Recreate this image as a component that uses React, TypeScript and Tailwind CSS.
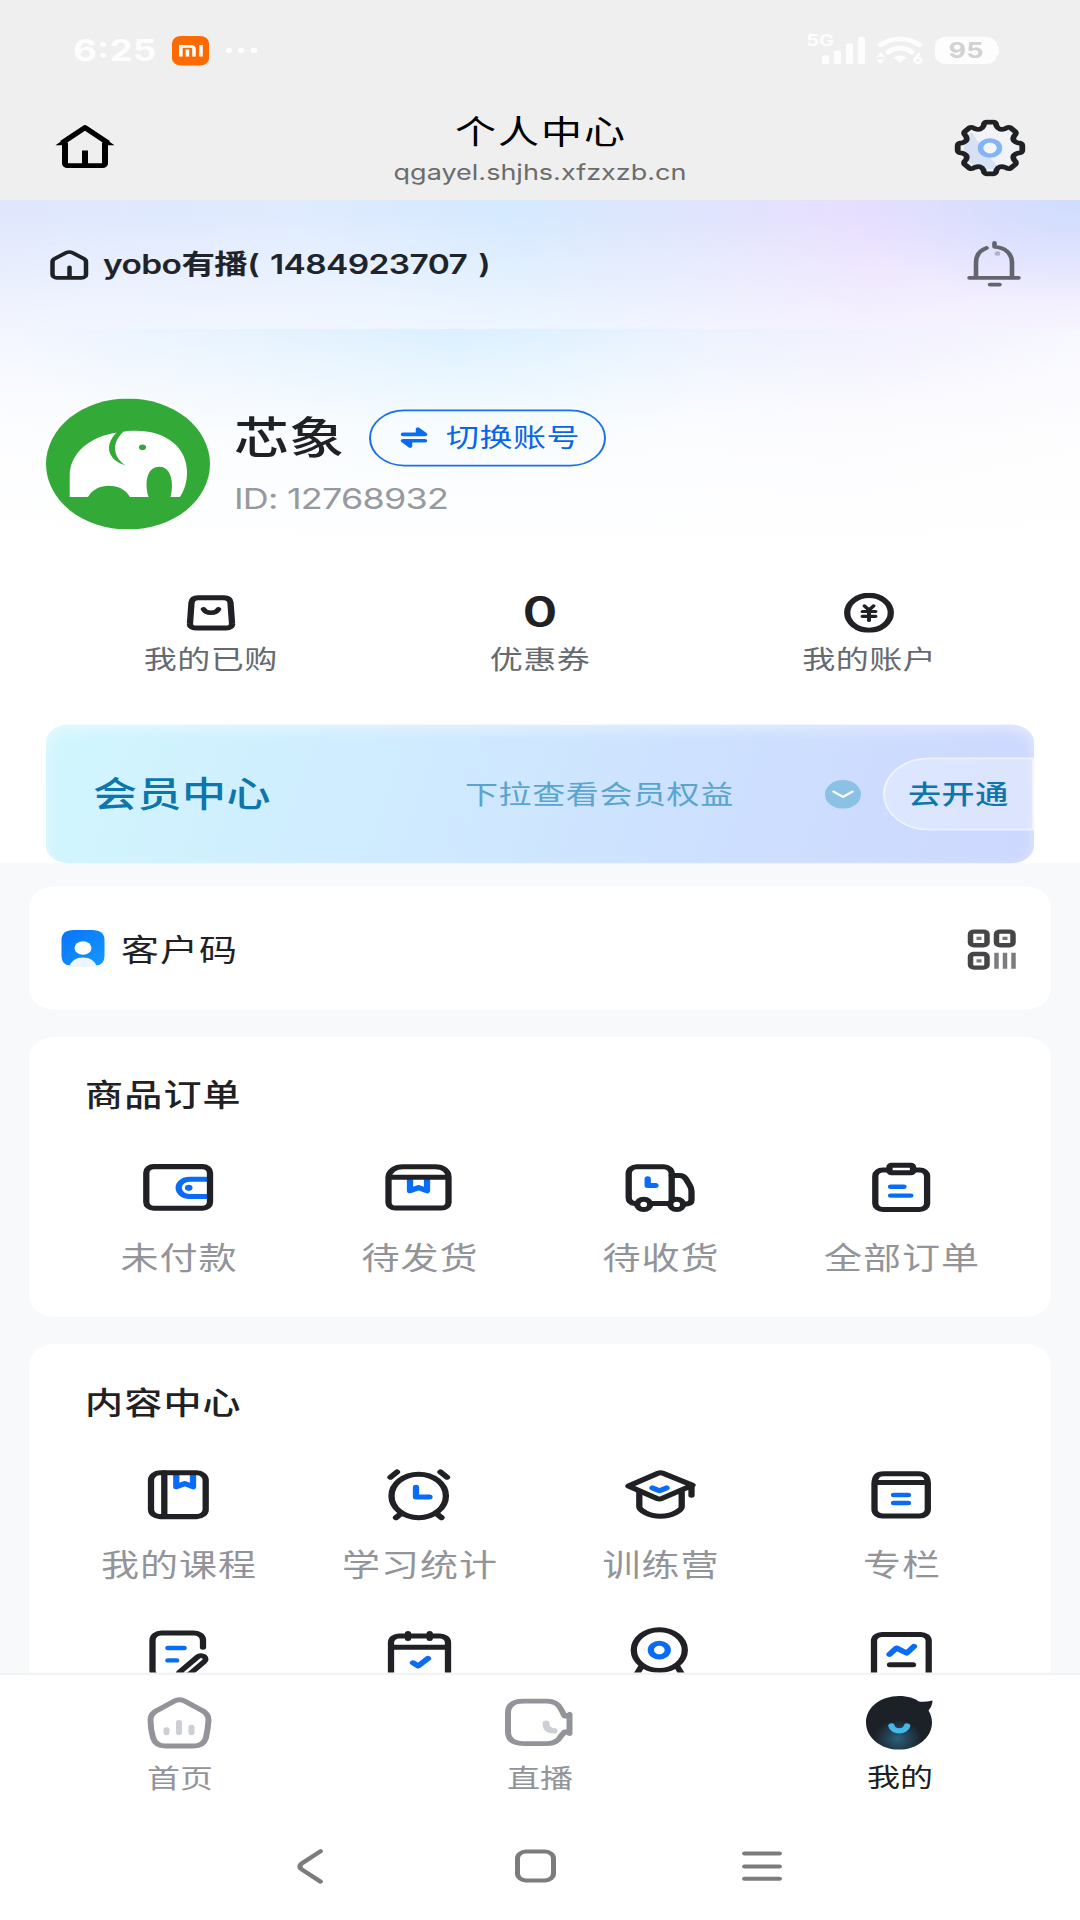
import type { ReactNode } from 'react'
import clsx from 'clsx'

const INK = '#1f2124'
const BLUE = '#0a6cf5'

function Icon({ size = 80, children, className }: { size?: number; children: ReactNode; className?: string }) {
  return (
    <svg
      width={size}
      height={size}
      viewBox={`0 0 ${size} ${size}`}
      fill="none"
      stroke={INK}
      strokeWidth={6.3}
      strokeLinecap="round"
      strokeLinejoin="round"
      className={clsx('shrink-0', className)}
    >
      {children}
    </svg>
  )
}

// Outline of the settings gear: eight round teeth joined by round notches
const polar = (deg: number, r: number) => {
  const a = (deg * Math.PI) / 180
  return `${(36 + r * Math.cos(a)).toFixed(1)} ${(36 + r * Math.sin(a)).toFixed(1)}`
}
const gearPath =
  Array.from({ length: 8 }, (_, k) => {
    const d = k * 45
    return `${k ? 'L' : 'M'}${polar(d - 13, 28.5)}Q${polar(d - 11, 32.5)} ${polar(d - 6, 32.5)}L${polar(d + 6, 32.5)}Q${polar(d + 11, 32.5)} ${polar(d + 13, 28.5)}Q${polar(d + 22.5, 23)} ${polar(d + 32, 28.5)}`
  }).join('') + 'Z'

type Item = { id: string; label?: string; icon: ReactNode }

const orders: Item[] = [
  {
    id: 'unpaid',
    label: '未付款',
    icon: (
      <Icon>
        <path d="M69 30H51.500a10.800 10.800 0 0 0 0 21.600H69" stroke={BLUE} strokeLinecap="butt" />
        <circle cx="50.700" cy="40.800" r="3.800" fill={BLUE} stroke="none" />
        <rect x="8.300" y="14.300" width="63.700" height="52" rx="7.500" />
      </Icon>
    ),
  },
  {
    id: 'unshipped',
    label: '待发货',
    icon: (
      <Icon>
        <path d="M31 29V44.500L39.500 40.500L48 44.500V29" stroke={BLUE} />
        <path d="M9.500 27.500C10 19.500 16 14.500 24 14.500H56C64 14.500 69.500 19.500 69.500 27.500V59a7 7 0 0 1-7 7H16.500a7 7 0 0 1-7-7ZM9.500 27.500H69.500" />
      </Icon>
    ),
  },
  {
    id: 'shipping',
    label: '待收货',
    icon: (
      <Icon>
        <path d="M15 60.500C11 60 8.700 57.500 8.700 53V22.500a8 8 0 0 1 8-8H43.700a8 8 0 0 1 8 8V56M31 60.500H49" />
        <path d="M51.700 25.500H59.500c3 0 5 1.500 6.500 4.500L69.500 37c1.500 3 2 5 2 8V56c0 3-1.500 4.500-5 5" />
        <circle cx="23.700" cy="61.500" r="6.500" />
        <circle cx="56.700" cy="61.500" r="6.500" />
        <path d="M27.700 29.500V38H35.500" stroke={BLUE} />
      </Icon>
    ),
  },
  {
    id: 'all',
    label: '全部订单',
    icon: (
      <Icon>
        <rect x="14.300" y="18.500" width="51.800" height="49.500" rx="7.500" />
        <rect x="28.500" y="12.500" width="23.500" height="9.500" rx="2" fill="white" />
        <path d="M29.700 39.500H42.800M29.700 50.500H49.700" stroke={BLUE} strokeWidth={5.5} />
      </Icon>
    ),
  },
]

const contents: Item[] = [
  {
    id: 'course',
    label: '我的课程',
    icon: (
      <Icon>
        <path d="M38.300 15V30.500L46.700 26.500L55 30.500V15" stroke={BLUE} />
        <rect x="13" y="13" width="54.700" height="54.800" rx="9" />
        <path d="M26.300 13V67" />
      </Icon>
    ),
  },
  {
    id: 'study',
    label: '学习统计',
    icon: (
      <Icon>
        <circle cx="39.700" cy="41.900" r="27.200" />
        <path d="M11.500 18.500L18 12M61.500 12L68 18.500M17 69L22.500 63.500M62.500 69L57 63.500" />
        <path d="M37 31V43.300H50.500" stroke={BLUE} />
      </Icon>
    ),
  },
  {
    id: 'camp',
    label: '训练营',
    icon: (
      <Icon>
        <path d="M19.300 37V55.500C19.300 59 28 67.300 40.500 67.300S61.700 59 61.700 55.500V37" />
        <path d="M8.500 29.500L38 13.500Q40.500 12.200 43 13.500L72.500 28.500L42 45Q39.500 46.300 37 45ZM71.500 30V41" />
        <path d="M32.500 32L39.500 35.500L46.500 32" stroke={BLUE} />
      </Icon>
    ),
  },
  {
    id: 'column',
    label: '专栏',
    icon: (
      <Icon>
        <path d="M13.500 26C14 18 16 14.300 23 14.300H57.500C64.500 14.300 66.500 18 66.800 26V59a8 8 0 0 1-8 8H21.500a8 8 0 0 1-8-8ZM14 25H66.500" />
        <path d="M32.700 40.800H47.300M32.700 50.800H47.300" stroke={BLUE} strokeWidth={5.5} />
      </Icon>
    ),
  },
  {
    id: 'homework',
    icon: (
      <Icon>
        <path d="M65 31V22.200a9 9 0 0 0-9-9H23.500a9 9 0 0 0-9 9V60a8 8 0 0 0 8 8h14" />
        <path d="M30 32H46M30 47.500H38.500" stroke={BLUE} strokeWidth={5.5} />
        <path d="M63 46L45 65" strokeWidth={15} />
        <path d="M63 46L47 63" stroke="white" strokeWidth={3} />
      </Icon>
    ),
  },
  {
    id: 'checkin',
    icon: (
      <Icon>
        <path d="M12 70V25a8 8 0 0 1 8-8H61a8 8 0 0 1 8 8V70M12 31H69M29 14V20M50.700 14V20" />
        <path d="M34 50.500L39.200 54.500L49 45" stroke={BLUE} />
      </Icon>
    ),
  },
  {
    id: 'camera',
    icon: (
      <Icon>
        <circle cx="39.300" cy="34.600" r="25.500" />
        <path d="M21 56L15.500 67M57.600 56L63 67" />
        <circle cx="39.300" cy="34.600" r="8.500" stroke={BLUE} />
      </Icon>
    ),
  },
  {
    id: 'report',
    icon: (
      <Icon>
        <path d="M13 70V23a8 8 0 0 1 8-8H59.700a8 8 0 0 1 8 8V70M29 53H52" />
        <path d="M28.500 40L35.500 32L45.700 38.500L53 30" stroke={BLUE} />
      </Icon>
    ),
  },
]

const stats = [
  {
    label: '我的已购',
    value: (
      <Icon size={50}>
        <path d="M12 6.300H38c4 0 6 2 6.500 6L46 38c.4 4-2 6-6 6H10c-4 0-6.400-2-6-6L5.500 12.300C6 8.300 8 6.300 12 6.300Z" />
        <path d="M17.500 20.500C20 26.500 30 26.500 32.500 20.500" strokeWidth={5.5} />
      </Icon>
    ),
  },
  { label: '优惠券', value: <span className="font-[Inter] text-[53px] leading-[49px] font-semibold">0</span> },
  {
    label: '我的账户',
    value: (
      <Icon size={50}>
        <circle cx="25" cy="25" r="21.800" />
        <path d="M20.500 16.500L25 21.500L29.500 16.500M18.500 23.400H31.500M18.500 29.400H31.500M25 22V34.500" strokeWidth={4} />
      </Icon>
    ),
  },
]

function StatusBar() {
  return (
    <div className="flex h-[126px] items-center pr-[81px] pl-[73px] font-[Inter] text-[#fdfdfd]">
      <span className="w-[99px] text-[37px] font-bold">6:25</span>
      <span className="flex size-[37px] items-center justify-center rounded-[9px] bg-[#ff6a00]">
        <svg width="24" height="15" viewBox="0 0 24 15" fill="none" stroke="white" strokeWidth={3.6}>
          <path d="M1.800 15V1.800H11.500a3.500 3.500 0 0 1 3.500 3.500V15M8.400 6V15M22 0V15" />
        </svg>
      </span>
      <svg width="36" height="10" viewBox="0 0 36 10" fill="currentColor" className="ml-[15px]">
        <circle cx="5" cy="5" r="3.200" />
        <circle cx="17" cy="5" r="3.200" />
        <circle cx="30" cy="5" r="3.200" />
      </svg>
      <div className="ml-auto flex items-center">
        <span className="mb-[26px] text-[20px] leading-none font-bold">5G</span>
        <svg width="44" height="34" viewBox="0 0 44 34" fill="currentColor" className="-ml-[12px]">
          <rect x="0" y="23" width="7" height="11" rx="2" />
          <rect x="12" y="17" width="7" height="17" rx="2" />
          <rect x="24" y="8" width="7" height="26" rx="2" />
          <rect x="36" y="0" width="7" height="34" rx="2" />
        </svg>
        <svg width="48" height="36" viewBox="0 0 48 36" fill="none" stroke="currentColor" strokeWidth={6} strokeLinecap="round" className="ml-[10px]">
          <path d="M5 11C16 1 32 1 43 11M12.500 20C19 13.500 29 13.500 35.500 20" />
          <path d="M17.500 27Q24 22 30.500 27L24 33.500Z" fill="currentColor" stroke="none" />
          <path d="M0 26L4.500 20L9 26ZM0 29L4.500 35L9 29Z" fill="currentColor" stroke="none" />
          <circle cx="42" cy="30.500" r="3.200" strokeWidth={3} />
          <path d="M39.500 28L43 22.500" strokeWidth={3} />
        </svg>
        <span className="ml-[11px] flex h-[34px] w-[62px] items-center justify-center rounded-[11px] bg-[#fdfdfd] text-[27px] font-bold text-[#d2d2d2]">
          95
        </span>
        <span className="h-[12px] w-[2px] rounded-r bg-[#fdfdfd]" />
      </div>
    </div>
  )
}

function TitleBar() {
  return (
    <div className="flex h-[124px] items-start justify-between pr-[54px] pl-[55px]">
      <svg width="60" height="58" viewBox="0 0 60 58" fill="none" stroke="black" strokeWidth={6} className="mt-[28px]">
        <path d="M10 24V50.500a2.500 2.500 0 0 0 2.500 2.500H47.500a2.500 2.500 0 0 0 2.500-2.500V24M30 34V53" />
        <path d="M7 24.500L30 5.500L53 24.500" strokeLinejoin="round" />
        <path d="M0.500 27.500L9 20V27.500ZM59.500 27.500L51 20V27.500Z" fill="black" stroke="none" />
      </svg>
      <div className="flex flex-col items-center pt-[9px] pl-[11px]">
        <h1 className="pl-[2px] text-[41px] leading-[54px] tracking-[2px] text-black">个人中心</h1>
        <p className="mt-[10px] font-[Inter] text-[27px] leading-[34px] text-[#6c6c6c]">qgayel.shjhs.xfzxzb.cn</p>
      </div>
      <svg width="72" height="72" viewBox="0 0 72 72" fill="none" className="mt-[23px]">
        <circle cx="36" cy="36" r="26" fill="#f1f3f7" />
        <path d="M18 17L28 36L45 61C28 66 8 56 10 34C10 26 13 20 18 17Z" fill="#d6e2f3" />
        <path d={gearPath} stroke={INK} strokeWidth={5.8} strokeLinejoin="round" />
        <circle cx="36" cy="36" r="9.500" stroke="#82b3fb" strokeWidth={5.5} fill="#f3f5f9" />
      </svg>
    </div>
  )
}

function ShopBar() {
  return (
    <div className="flex h-[161px] items-center bg-[radial-gradient(ellipse_240px_130px_at_100%_0%,#cfdcfd,rgba(207,220,253,0)),linear-gradient(to_bottom,rgba(255,255,255,0)_10%,rgba(255,255,255,0.6)_100%),linear-gradient(to_right,#e0e7fd,#dfebfe_28%,#d5e9fe_48%,#e0e4fd_65%,#e8defe_80%,#e9e4fe)] pr-[56px] pl-[49px]">
      <Icon size={40}>
        <path
          d="M5.500 12.500C4 13.500 3.500 14.700 3.500 16.500V32a4.300 4.300 0 0 0 4.300 4.300H32.700A4.300 4.300 0 0 0 37 32V16.500c0-1.800-.5-3-2-4L23.500 5c-2.200-1.400-4.300-1.400-6.500 0ZM20.500 23V36"
          strokeWidth={4.5}
        />
      </Icon>
      <p className="ml-[14px] pt-px font-[Inter,'Noto_Sans_CJK_SC',sans-serif] text-[33.500px] font-semibold tracking-[-0.600px] text-[#1f242b] [word-spacing:3px]">
        yobo有播( 1484923707 )
      </p>
      <svg width="60" height="60" viewBox="0 0 60 60" fill="none" stroke="#62656e" strokeWidth={4.6} strokeLinecap="round" strokeLinejoin="round" className="mb-[4px] ml-auto">
        <path d="M12 48V29C12 19 16 14 22.500 11M30.500 4.500V9.500C41 10 48 18 48 29V48M5.500 48.300H54.500M26 56.700H35.500" />
        <circle cx="33.500" cy="18" r="2.800" fill="#b4aec8" stroke="none" />
      </svg>
    </div>
  )
}

function Profile() {
  return (
    <div className="flex h-[251px] pt-[87px] pl-[46px]">
      <svg width="164" height="164" viewBox="0 0 164 164">
        <circle cx="82" cy="82" r="82" fill="#33a937" />
        <path
          d="M23.700 123.300V96C24 68 44 47 72 42.500C84 39.500 99 39.500 110 44C130 52 141 70 141 92C141 106 138 115 134 123.300H124.500C128 108 126 85.400 113.300 85.400C100 85.400 98.500 108 102.600 123.300H84C76 104.500 50 104.500 42 123.300Z"
          fill="white"
        />
        <path d="M72 41C59 55 59 76 80 84C68 75 64 56 78 41Z" fill="#33a937" />
        <circle cx="96.500" cy="61" r="3.500" fill="#33a937" />
      </svg>
      <div className="ml-[24px] pt-[12px]">
        <div className="flex h-[74px] items-center">
          <h2 className="w-[135px] pb-[8px] text-[55px] leading-[74px] font-medium">芯象</h2>
          <button className="flex h-[71px] w-[237px] items-center rounded-full border-2 border-[#1a70ea] pb-[2px] pl-[28px] text-[33px] tracking-[0.500px] text-[#0a66e8]">
            <svg width="30" height="30" viewBox="0 0 30 30" fill={BLUE} stroke={BLUE} strokeWidth={4.5} strokeLinecap="round" strokeLinejoin="round" className="mt-[2px] mr-[17px]">
              <path d="M4 11H26L19 4.500V11M26 19H4L11 25.500V19" />
            </svg>
            切换账号
          </button>
        </div>
        <p className="mt-[15px] font-[Inter] text-[36px] leading-[48px] tracking-[-0.800px] text-[#97999d]">ID: 12768932</p>
      </div>
    </div>
  )
}

function MemberCard() {
  return (
    <div className="mx-[46px] flex h-[173px] items-center overflow-hidden rounded-[22px] bg-[linear-gradient(105deg,#d1f6fd,#cfe9ff_42%,#cddffe_70%,#cdd8fe)] pl-[47px] shadow-[inset_0_6px_16px_rgba(255,255,255,0.45)]">
      <h3 className="w-[372px] pb-[6px] text-[44px] font-medium tracking-[0.500px] text-[#0d76ad]">会员中心</h3>
      <p className="w-[360px] pb-[2px] text-[33px] tracking-[0.600px] text-[#5aa5cf]">下拉查看会员权益</p>
      <svg width="36" height="36" viewBox="0 0 36 36" fill="none">
        <circle cx="18" cy="18" r="18" fill="#8cc1e6" />
        <path d="M8.500 14.500L18 21L27.500 14.500" stroke="white" strokeWidth={2.5} strokeLinecap="round" strokeLinejoin="round" />
      </svg>
      <div className="ml-auto flex h-[91px] w-[151px] items-center rounded-l-full border-2 border-white/50 bg-white/30 pb-[2px] pl-[23px] text-[33px] font-medium tracking-[0.600px] text-[#0d76ad]">
        去开通
      </div>
    </div>
  )
}

function IconGrid({ title, items, className }: { title: string; items: Item[]; className?: string }) {
  return (
    <section className={clsx('rounded-[26px] bg-white pt-[43px] pr-[30px] pl-[28px]', className)}>
      <h3 className="pl-[28px] text-[38px] leading-[56px] font-medium tracking-[1.200px]">{title}</h3>
      <div className="mt-[49px] grid grid-cols-4">
        {items.map((item) => (
          <div key={item.id} className="flex h-[200px] flex-col items-center">
            {item.icon}
            {item.label && (
              <span className="mt-[18px] pl-[3px] text-[38px] leading-[56px] tracking-[1px] text-[#929499]">{item.label}</span>
            )}
          </div>
        ))}
      </div>
    </section>
  )
}

function TabBar() {
  const tab = 'flex w-[360px] flex-col items-center gap-[10px] text-[33px] leading-[48px]'
  return (
    <nav className="flex h-[179px] border-t-[3px] border-[#f3f3f4] bg-white pt-[26px] text-[#929499]">
      <div className={tab}>
        <svg width="68" height="67" viewBox="0 0 68 67" fill="none" stroke="#929499" strokeWidth={6} strokeLinejoin="round" strokeLinecap="round">
          <path d="M28 6.500Q33.500 3 39 6.500L56 18Q62.500 22 62.500 30Q62 41 60 52Q57.500 62.500 47.500 62.500H19.500Q9.500 62.500 7 52Q4.500 41 4.500 30Q4.500 22 11 18Z" />
          <path d="M20.500 42V46M33 33V46M45.500 39V46" stroke="#ccd0d4" />
        </svg>
        <span>首页</span>
      </div>
      <div className={tab}>
        <svg width="72" height="67" viewBox="0 0 72 67" fill="none" stroke="#929499" strokeWidth={6} strokeLinejoin="round" strokeLinecap="round">
          <path d="M42 34Q42 43 50 43.500" stroke="#ccd0d4" strokeWidth={7} />
          <path d="M19.500 6.500H43Q53 6.500 57 16.500L60.500 25H62.500L65.500 23V47L62.500 45H60.500L57 50Q53 59.500 43 59.500H19.500Q4 59.500 4 44.500V21.500Q4 6.500 19.500 6.500Z" />
        </svg>
        <span>直播</span>
      </div>
      <div className={clsx(tab, 'text-[#1c1f23]')}>
        <svg width="69" height="69" viewBox="0 0 69 69" className="-mt-[1px]">
          <defs>
            <radialGradient id="mascot" cx="48%" cy="80%" r="36%">
              <stop offset="0%" stopColor="#2a5f7b" />
              <stop offset="100%" stopColor="#1c2127" />
            </radialGradient>
          </defs>
          <path d="M33 1C42 1 49 4 53 8Q59 9 66.500 6.500Q66.500 13 62.500 19Q66 26 66 34C66 53 51 68 33 68S0 53 0 34S15 1 33 1Z" fill="url(#mascot)" />
          <path d="M25.500 38.500C27 46.500 39.500 46.500 41 38.500" fill="none" stroke="#45b8ea" strokeWidth={6.5} strokeLinecap="round" />
        </svg>
        <span className="-mt-[2px]">我的</span>
      </div>
    </nav>
  )
}

function SystemNav() {
  return (
    <div className="flex h-[130px] items-start bg-white pt-[40px] pl-[294px]">
      <svg width="32" height="46" viewBox="0 0 32 46" fill="none" stroke="#7c7c7c" strokeWidth={5} strokeLinecap="round" strokeLinejoin="round">
        <path d="M26.500 4L7.500 19.500Q4 23 7.500 26.500L26.500 42" />
      </svg>
      <span className="mt-[2px] ml-[189px] size-[41px] rounded-[11px] border-5 border-[#7c7c7c]" />
      <svg width="40" height="46" viewBox="0 0 40 46" stroke="#7c7c7c" strokeWidth={5} strokeLinecap="round" className="ml-[186px]">
        <path d="M2.500 7H37.500M2.500 23H37.500M2.500 38.500H37.500" />
      </svg>
    </div>
  )
}

export default function App() {
  return (
    <div className="h-[1920px] w-[1080px] overflow-hidden bg-white">
      {/* 1080x2400 screen, compressed vertically to a 1920px tall frame */}
      <div className="flex h-[2400px] w-[1080px] origin-top scale-y-80 flex-col font-['Noto_Sans_CJK_SC',sans-serif] text-[#1f2124]">
        <header className="h-[250px] shrink-0 bg-[#efefef]">
          <StatusBar />
          <TitleBar />
        </header>

        <main className="h-[1841px] shrink-0 overflow-hidden bg-[#f7f9fb]">
          <div className="flex h-[829px] flex-col bg-white">
            <ShopBar />
            <div className="h-[495px] bg-[linear-gradient(to_bottom,rgba(255,255,255,0)_0,rgba(255,255,255,0.4)_60px,rgba(255,255,255,0.8)_130px,#fff_280px),linear-gradient(to_right,#f3f6ff,#e8f3fe_20%,#dbf0ff_42%,#dff1ff_50%,#ecf2fe_65%,#f1f0fe_80%,#f7f7ff)]">
              <Profile />
              <div className="grid grid-cols-3 px-[46px] pt-[79px]">
                {stats.map((stat) => (
                  <div key={stat.label} className="flex h-[105px] flex-col items-center justify-between">
                    {stat.value}
                    <span className="text-[33px] leading-[48px] tracking-[0.500px] text-[#666a70]">{stat.label}</span>
                  </div>
                ))}
              </div>
            </div>
            <MemberCard />
          </div>

          <div className="flex flex-col gap-[34px] px-[29px] pt-[29px]">
            <section className="flex h-[154px] items-center rounded-[26px] bg-white pr-[34px] pl-[31px]">
              <svg width="46" height="48" viewBox="0 0 46 48">
                <defs>
                  <linearGradient id="customer" x1="0" y1="0" x2="1" y2="1">
                    <stop offset="0%" stopColor="#0873fb" />
                    <stop offset="100%" stopColor="#1698ff" />
                  </linearGradient>
                </defs>
                <path d="M14 1.500H32Q44.500 1.500 44.500 14V34Q44.500 46 35 46H11Q1.500 46 1.500 34V14Q1.500 1.500 14 1.500Z" fill="url(#customer)" />
                <circle cx="23" cy="24" r="8.500" fill="white" />
                <path d="M9 48Q12 36 23 36T37 48Z" fill="#eef5ff" />
              </svg>
              <span className="ml-[15px] pb-[2px] text-[38px] tracking-[1px]">客户码</span>
              <svg width="50" height="52" viewBox="0 0 50 52" fill="none" stroke="#444547" strokeWidth={5.5} className="mt-[3px] ml-auto">
                <rect x="3.500" y="3.500" width="16.500" height="17" rx="3.500" />
                <rect x="29.500" y="3.500" width="16.500" height="17" rx="3.500" />
                <rect x="3.500" y="31.500" width="16.500" height="17" rx="3.500" />
                <path d="M9.500 12H14.500M35.500 12H40.500M9.500 40H14.500" stroke="#777" strokeWidth={4} />
                <path d="M29.500 30V50M38 30V50M46.500 30V50" stroke="#7b7c80" strokeWidth={4.5} />
              </svg>
            </section>
            <IconGrid title="商品订单" items={orders} className="h-[350px]" />
            <IconGrid title="内容中心" items={contents} />
          </div>
        </main>

        <TabBar />
        <SystemNav />
      </div>
    </div>
  )
}
